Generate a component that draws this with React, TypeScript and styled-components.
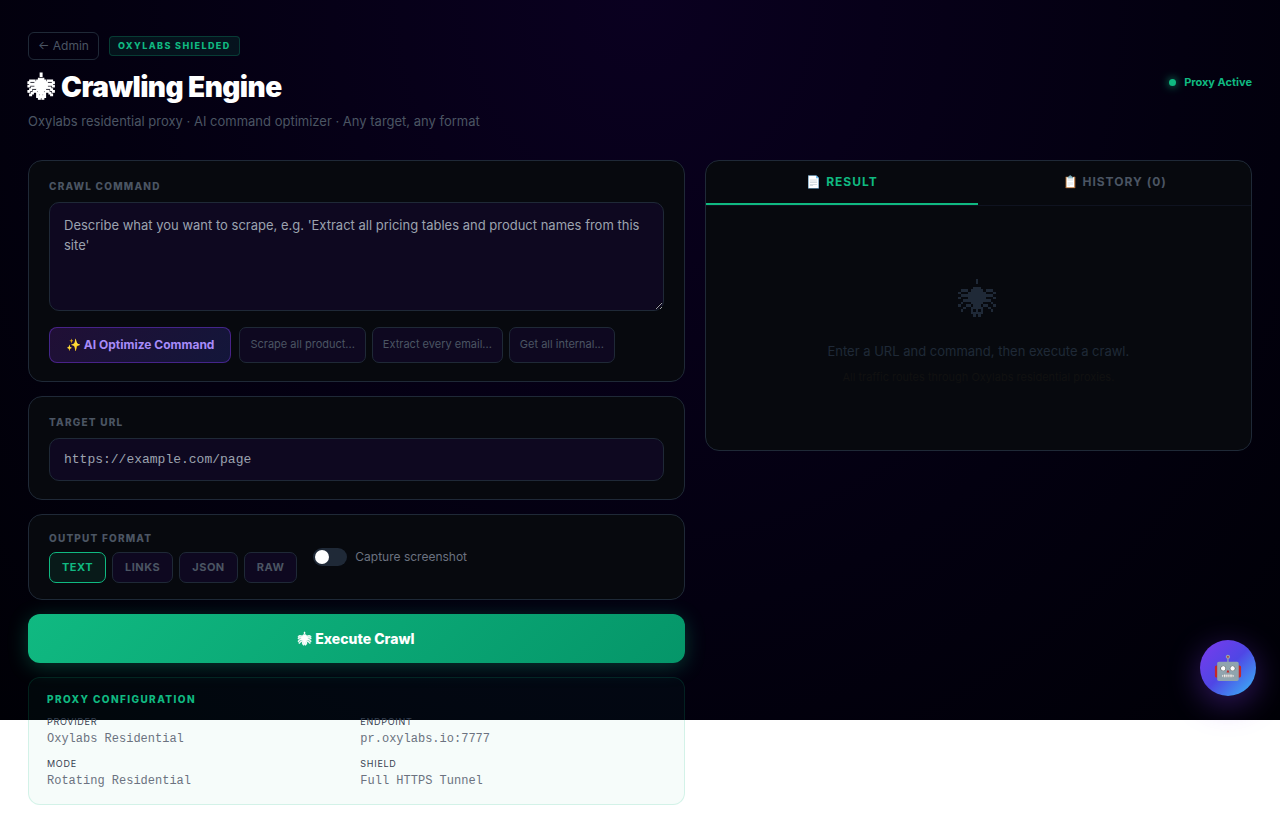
import React, { useState } from "react";
import styled, { createGlobalStyle, css } from "styled-components";

const GREEN = "#10b981";
const LINE = "#1f2937";
const MUTED = "#4b5563";
const FIELD = "#0e0820";
const PANEL = "#07090e";
const SANS = 'Inter, "Liberation Sans", sans-serif';
const MONO = '"Liberation Mono", monospace';

const GlobalStyle = createGlobalStyle`
  *, *::before, *::after { box-sizing: border-box; }
  body {
    margin: 0;
    background: #fff;
    font-family: ${SANS};
    line-height: 24px;
  }
  button, input, textarea { font-family: inherit; margin: 0; }
  button { cursor: pointer; }
  h1, h2, p, dl, dd, dt, fieldset, legend { margin: 0; padding: 0; }
  fieldset { border: 0; min-width: 0; }
`;

const Page = styled.div`
  padding: 32px 28px;
  background: radial-gradient(ellipse at 50% 0%, #0a0020 0%, #030010 60%, #000006 100%) no-repeat top / 100% 720px;
`;

const Header = styled.header`
  display: flex;
  align-items: center;
  justify-content: space-between;
  margin-bottom: 28px;
`;

const Crumbs = styled.div`
  display: flex;
  align-items: center;
  gap: 10px;
  margin-bottom: 10px;
`;

const BackLink = styled.a`
  padding: 5px 9px;
  border: 1px solid ${LINE};
  border-radius: 6px;
  color: ${MUTED};
  font-size: 12px;
  line-height: 16px;
  text-decoration: none;
`;

const Badge = styled.span`
  padding: 3px 8px;
  border: 1px solid rgba(16, 185, 129, 0.25);
  border-radius: 4px;
  background: rgba(16, 185, 129, 0.1);
  color: ${GREEN};
  font-size: 9px;
  font-weight: 800;
  letter-spacing: 1.4px;
  line-height: 12px;
`;

const Title = styled.h1`
  color: #fff;
  font-size: 28px;
  font-weight: 900;
  letter-spacing: -0.56px;
  line-height: 34px;
`;

const Subtitle = styled.p`
  margin-top: 7px;
  color: ${MUTED};
  font-size: 13px;
  line-height: 21px;
`;

const Status = styled.div`
  display: flex;
  align-items: center;
  gap: 8px;
  color: ${GREEN};
  font-size: 11px;
  font-weight: 700;
`;

const StatusDot = styled.span`
  width: 7px;
  height: 7px;
  border-radius: 50%;
  background: ${GREEN};
  box-shadow: 0 0 8px ${GREEN};
`;

const SpiderSvg = styled.svg<{ $bold?: boolean }>`
  width: 1em;
  height: 1em;
  overflow: visible;
  vertical-align: -0.125em;
  fill: currentColor;
  stroke: currentColor;
  stroke-width: ${(p) => (p.$bold ? 0.7 : 0)};
`;

const Columns = styled.main`
  display: grid;
  grid-template-columns: 1.2fr 1fr;
  align-items: start;
  gap: 20px;
`;

const Stack = styled.form`
  display: flex;
  flex-direction: column;
  gap: 14px;
`;

const Card = styled.section<{ $compact?: boolean }>`
  padding: ${(p) => (p.$compact ? 16 : 18)}px 20px;
  border: 1px solid ${LINE};
  border-radius: 14px;
  background: ${PANEL};
`;

const labelText = css`
  display: block;
  color: ${MUTED};
  font-size: 10px;
  font-weight: 800;
  letter-spacing: 1.2px;
  line-height: 15px;
`;

const Label = styled.label`
  ${labelText}
  margin-bottom: 8px;
`;

const Legend = styled.legend`
  ${labelText}
  margin-bottom: 6px;
`;

const field = css`
  display: block;
  width: 100%;
  border: 1px solid ${LINE};
  border-radius: 10px;
  background: ${FIELD};
  color: #e5e7eb;
  font-size: 13px;
  outline: none;
  &::placeholder { color: #9ca3af; opacity: 1; }
`;

const CommandBox = styled.textarea`
  ${field}
  height: 109px;
  padding: 12px 14px;
  line-height: 20px;
  resize: vertical;
`;

const UrlBox = styled.input`
  ${field}
  height: 43px;
  padding: 12px 14px;
  && { font-family: ${MONO}; }
`;

const ActionRow = styled.div`
  display: flex;
  flex-wrap: wrap;
  gap: 6px;
  margin-top: 16px;
`;

const OptimizeButton = styled.button`
  margin-right: 2px;
  padding: 0 16px 2px;
  height: 36px;
  border: 1px solid rgba(124, 58, 237, 0.45);
  border-radius: 8px;
  background: linear-gradient(135deg, #200f35, #13163a);
  color: #a78bfa;
  font-size: 12px;
  font-weight: 700;
`;

const PresetButton = styled.button`
  padding: 0 10px 2px;
  height: 36px;
  border: 1px solid ${LINE};
  border-radius: 7px;
  background: ${FIELD};
  color: ${MUTED};
  font-size: 11px;
`;

const OutputRow = styled.div`
  display: flex;
  align-items: center;
  gap: 16px;
`;

const Formats = styled.div`
  display: flex;
  gap: 6px;
`;

const FormatButton = styled.button<{ $active: boolean }>`
  padding: 0 12px 2px;
  height: 31px;
  border: 1px solid ${(p) => (p.$active ? GREEN : LINE)};
  border-radius: 7px;
  background: ${(p) => (p.$active ? "#081a19" : FIELD)};
  color: ${(p) => (p.$active ? GREEN : MUTED)};
  font-size: 11px;
  font-weight: 700;
  letter-spacing: 0.5px;
`;

const SwitchLabel = styled.label`
  display: flex;
  align-items: center;
  gap: 8px;
  color: #6b7280;
  font-size: 12px;
  cursor: pointer;
`;

const Switch = styled.input`
  appearance: none;
  width: 34px;
  height: 18px;
  padding: 2px;
  border-radius: 9px;
  background: ${LINE};
  cursor: pointer;
  &::before {
    content: "";
    display: block;
    width: 14px;
    height: 14px;
    border-radius: 50%;
    background: #fff;
  }
  &:checked { background: ${GREEN}; }
  &:checked::before { margin-left: 16px; }
`;

const ExecuteButton = styled.button`
  height: 49px;
  border: 0;
  border-radius: 12px;
  background: linear-gradient(135deg, #10b981, #059669);
  box-shadow: 0 4px 20px rgba(16, 185, 129, 0.3);
  color: #fff;
  font-size: 14px;
  font-weight: 800;
`;

const ProxyCard = styled.section`
  padding: 14px 18px 13px;
  border: 1px solid rgba(16, 185, 129, 0.15);
  border-radius: 12px;
  background: rgba(16, 185, 129, 0.04);
`;

const ProxyTitle = styled.h2`
  margin-bottom: 8px;
  color: ${GREEN};
  font-size: 10px;
  font-weight: 800;
  letter-spacing: 1.4px;
  line-height: 15px;
`;

const ProxyGrid = styled.dl`
  display: grid;
  grid-template-columns: 1fr 1fr;
  gap: 8px;
`;

const ProxyTerm = styled.dt`
  color: #374151;
  font-size: 9px;
  letter-spacing: 0.72px;
  line-height: 14px;
`;

const ProxyValue = styled.dd`
  color: #6b7280;
  font-family: ${MONO};
  font-size: 12px;
  line-height: 20px;
`;

const ResultPanel = styled.section`
  border: 1px solid ${LINE};
  border-radius: 14px;
  background: ${PANEL};
  overflow: hidden;
`;

const Tabs = styled.div`
  display: flex;
  border-bottom: 1px solid #0f1320;
`;

const Tab = styled.button<{ $active: boolean }>`
  flex: 1;
  height: 44px;
  padding: 0 0 2px;
  border: 0;
  border-bottom: 2px solid ${(p) => (p.$active ? GREEN : "transparent")};
  background: transparent;
  color: ${(p) => (p.$active ? GREEN : MUTED)};
  font-size: 12px;
  font-weight: 700;
  letter-spacing: 1px;
`;

const EmptyState = styled.div`
  padding: 62px 20px 64px;
  text-align: center;
`;

const EmptyIcon = styled.div`
  margin-bottom: 9px;
  color: ${LINE};
  font-size: 40px;
  line-height: 64px;
`;

const EmptyText = styled.p`
  color: #1f2937;
  font-size: 13px;
  line-height: 20px;
`;

const EmptyHint = styled.p`
  margin-top: 7px;
  color: #111111;
  font-size: 11px;
  line-height: 18px;
`;

const Assistant = styled.button`
  position: fixed;
  right: 24px;
  top: 640px;
  width: 56px;
  height: 56px;
  padding: 0 0 2px;
  border: 0;
  border-radius: 50%;
  background: linear-gradient(135deg, #7c3aed, #4f46e5 50%, #38bdf8);
  box-shadow: 0 8px 32px rgba(124, 58, 237, 0.4);
  font-size: 24px;
`;

const SPIDER_ROWS = [
  ".......#.......",
  ".......#.......",
  "...............",
  "......###......",
  ".###.#####.###.",
  "#...#######...#",
  ".#############.",
  "#...#######...#",
  "..###########..",
  ".#...#####...#.",
  "#..##.###.##..#",
  "..#..#####..#..",
  ".#...#.#.#...#.",
  ".....#####.....",
  "......#.#......",
];

const SPIDER_PATH = SPIDER_ROWS.map((row, y) =>
  [...row.matchAll(/#+/g)].map((m) => `M${m.index} ${y}h${m[0].length}v1h-${m[0].length}z`).join("")
).join("");

function Spider({ bold }: { bold?: boolean }) {
  return (
    <SpiderSvg $bold={bold} viewBox="0 0 16 16" shapeRendering={bold ? "auto" : "crispEdges"} aria-hidden="true">
      <path d={SPIDER_PATH} />
    </SpiderSvg>
  );
}

const PRESETS = ["Scrape all product...", "Extract every email...", "Get all internal..."];
const FORMATS = ["TEXT", "LINKS", "JSON", "RAW"];
const PROXY = [
  ["PROVIDER", "Oxylabs Residential"],
  ["ENDPOINT", "pr.oxylabs.io:7777"],
  ["MODE", "Rotating Residential"],
  ["SHIELD", "Full HTTPS Tunnel"],
];

export default function App() {
  const [format, setFormat] = useState("TEXT");
  const [tab, setTab] = useState("result");

  return (
    <>
      <GlobalStyle />
      <Page>
        <Header>
          <div>
            <Crumbs>
              <BackLink href="#admin">← Admin</BackLink>
              <Badge>OXYLABS SHIELDED</Badge>
            </Crumbs>
            <Title><Spider bold /> Crawling Engine</Title>
            <Subtitle>Oxylabs residential proxy · AI command optimizer · Any target, any format</Subtitle>
          </div>
          <Status>
            <StatusDot />
            Proxy Active
          </Status>
        </Header>

        <Columns>
          <Stack onSubmit={(e) => e.preventDefault()}>
            <Card>
              <Label htmlFor="command">CRAWL COMMAND</Label>
              <CommandBox
                id="command"
                placeholder="Describe what you want to scrape, e.g. 'Extract all pricing tables and product names from this site'"
              />
              <ActionRow>
                <OptimizeButton type="button">✨ AI Optimize Command</OptimizeButton>
                {PRESETS.map((p) => (
                  <PresetButton type="button" key={p}>{p}</PresetButton>
                ))}
              </ActionRow>
            </Card>

            <Card>
              <Label htmlFor="url">TARGET URL</Label>
              <UrlBox id="url" type="url" placeholder="https://example.com/page" />
            </Card>

            <Card $compact>
              <OutputRow>
                <fieldset>
                  <Legend>OUTPUT FORMAT</Legend>
                  <Formats>
                    {FORMATS.map((f) => (
                      <FormatButton
                        type="button"
                        key={f}
                        $active={f === format}
                        aria-pressed={f === format}
                        onClick={() => setFormat(f)}
                      >
                        {f}
                      </FormatButton>
                    ))}
                  </Formats>
                </fieldset>
                <SwitchLabel>
                  <Switch type="checkbox" role="switch" />
                  Capture screenshot
                </SwitchLabel>
              </OutputRow>
            </Card>

            <ExecuteButton type="submit"><Spider bold /> Execute Crawl</ExecuteButton>

            <ProxyCard>
              <ProxyTitle>PROXY CONFIGURATION</ProxyTitle>
              <ProxyGrid>
                {PROXY.map(([term, value]) => (
                  <div key={term}>
                    <ProxyTerm>{term}</ProxyTerm>
                    <ProxyValue>{value}</ProxyValue>
                  </div>
                ))}
              </ProxyGrid>
            </ProxyCard>
          </Stack>

          <ResultPanel>
            <Tabs role="tablist">
              <Tab type="button" role="tab" aria-selected={tab === "result"} $active={tab === "result"} onClick={() => setTab("result")}>
                📄 RESULT
              </Tab>
              <Tab type="button" role="tab" aria-selected={tab === "history"} $active={tab === "history"} onClick={() => setTab("history")}>
                📋 HISTORY (0)
              </Tab>
            </Tabs>
            <EmptyState>
              <EmptyIcon><Spider /></EmptyIcon>
              <EmptyText>Enter a URL and command, then execute a crawl.</EmptyText>
              <EmptyHint>All traffic routes through Oxylabs residential proxies.</EmptyHint>
            </EmptyState>
          </ResultPanel>
        </Columns>
      </Page>
      <Assistant type="button" aria-label="Open assistant">🤖</Assistant>
    </>
  );
}
